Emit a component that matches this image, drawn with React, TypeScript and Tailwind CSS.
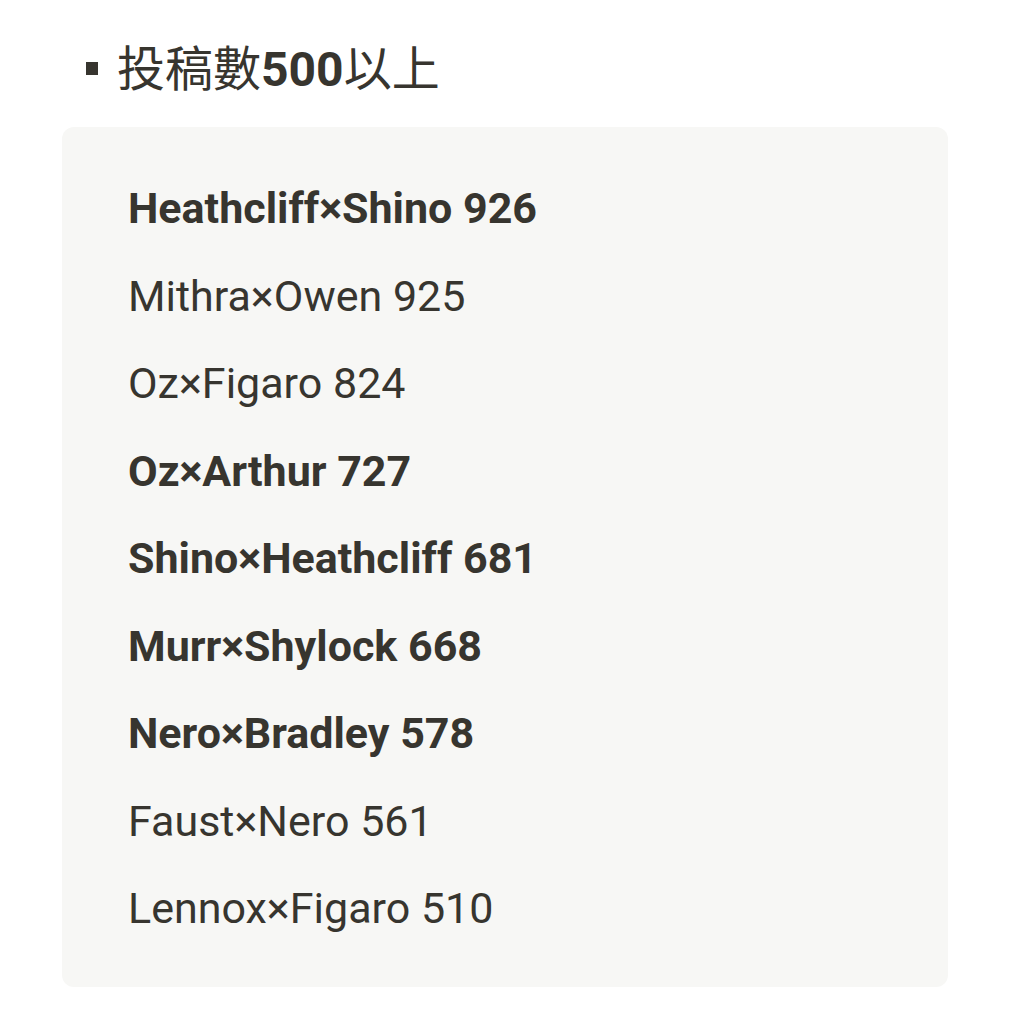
const pairs: { name: string; count: number; bold: boolean }[] = [
  { name: 'Heathcliff×Shino', count: 926, bold: true },
  { name: 'Mithra×Owen', count: 925, bold: false },
  { name: 'Oz×Figaro', count: 824, bold: false },
  { name: 'Oz×Arthur', count: 727, bold: true },
  { name: 'Shino×Heathcliff', count: 681, bold: true },
  { name: 'Murr×Shylock', count: 668, bold: true },
  { name: 'Nero×Bradley', count: 578, bold: true },
  { name: 'Faust×Nero', count: 561, bold: false },
  { name: 'Lennox×Figaro', count: 510, bold: false },
];

export default function App() {
  return (
    <div
      className="min-h-screen bg-white text-[#37352f]"
      style={{ fontFamily: 'Roboto, "Noto Sans CJK TC", sans-serif' }}
    >
      <div className="px-[62px] pt-[40px]">
        <div className="flex items-center h-[60px] text-[48px] leading-[60px]">
          <span className="w-[12px] h-[13px] bg-[#37352f] ml-[24px] mr-[19px] mb-[4px]" />
          <span>
            投稿數<span className="font-bold">500</span>以上
          </span>
        </div>
        <div className="mt-[27px] w-[886px] rounded-[12px] bg-[#f7f7f5] pl-[66px] pt-[38px] pb-[34px]">
          {pairs.map((p) => (
            <div
              key={p.name}
              className={`text-[43px] leading-[87.5px] ${p.bold ? 'font-bold' : 'font-normal'}`}
            >
              {p.name} {p.count}
            </div>
          ))}
        </div>
      </div>
    </div>
  );
}
